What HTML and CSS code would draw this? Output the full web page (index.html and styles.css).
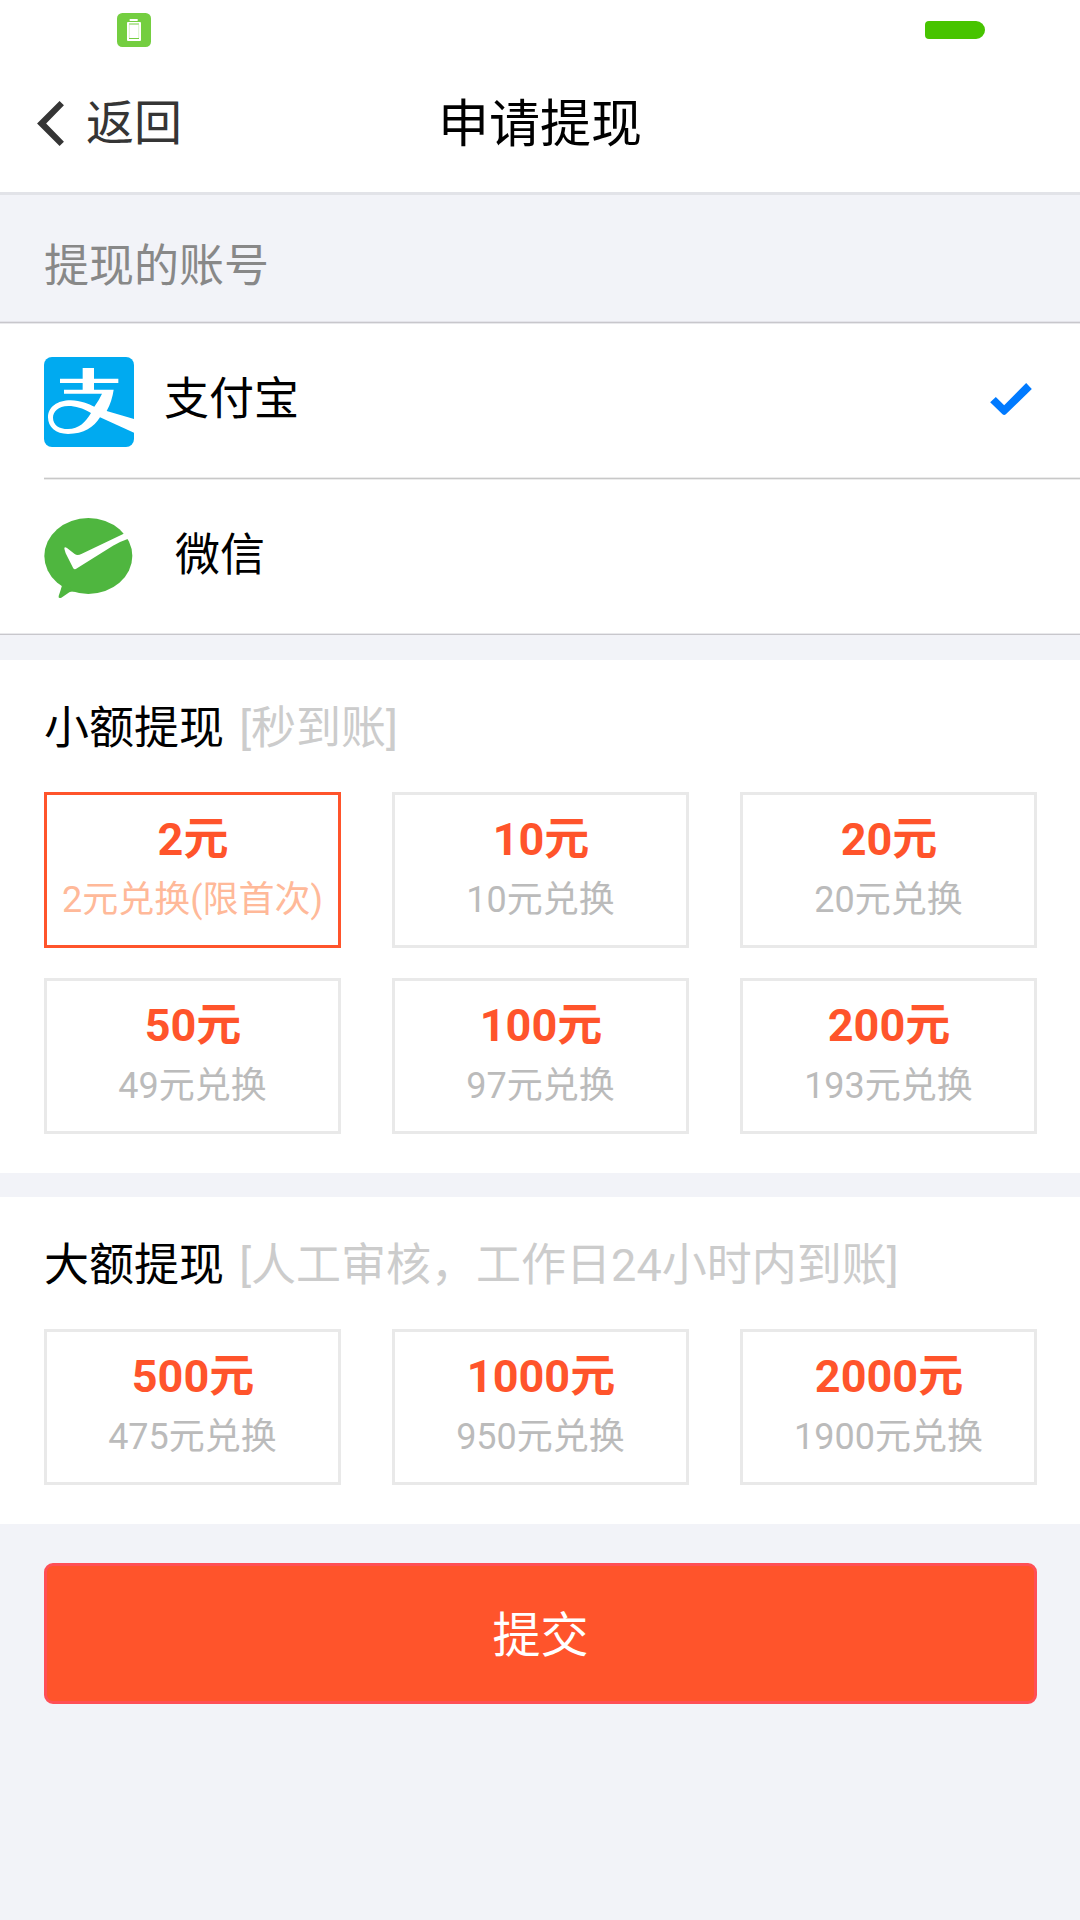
FILE: index.html
```
<!DOCTYPE html>
<html lang="zh-CN">
<head>
    <meta charset="UTF-8">
    <meta name="viewport" content="width=device-width, initial-scale=1.0">
    <title>申请提现</title>
    <link rel="stylesheet" href="styles.css">
</head>
<body>
    <div class="status-bar">
        <svg class="battery-app" viewBox="0 0 102 102">
            <rect width="102" height="102" rx="16" fill="#74ce40"/>
            <rect x="38" y="18" width="24" height="6" fill="#fff"/>
            <rect x="30" y="27" width="42" height="57" rx="3" fill="#fff"/>
            <path d="M36 33h30M36 76.500h30" stroke="#74ce40" stroke-width="3"/>
            <path d="M37 36v39M65 36v39" stroke="#c7ebb3" stroke-width="2"/>
        </svg>
        <div class="battery-level"></div>
    </div>

    <header class="header">
        <a class="back">
            <svg class="back-icon" viewBox="0 0 80 134"><path d="M67 0L80 13L27 67L80 121L67 134L0 67z" fill="#353535"/></svg>
            <span>返回</span>
        </a>
        <h1 class="title">申请提现</h1>
    </header>

    <h2 class="label">提现的账号</h2>
    <div class="accounts">
        <div class="account">
            <svg class="account-icon" viewBox="0 0 270 270">
                <rect width="270" height="270" rx="24" fill="#00aaf0"/>
                <path d="M116 33H150V65H223V78H150V98H209Q204 133 188 162L270 186V227L168 181C150 210 120 231 72 231C35 231 12 210 12 181C12 150 40 130 80 130C110 130 135 142 151 149Q165 130 174 110H60V98H116V78H48V65H116zM141 168C115 153 95 147 73 147C42 147 27 165 27 182C27 204 45 216 72 216C105 216 125 195 141 168z" fill="#fff" fill-rule="evenodd"/>
            </svg>
            <span class="account-name">支付宝</span>
            <svg class="check" viewBox="0 0 125 96"><path d="M0 58L17 42L42 67L108 0L125 18L47 94Q42 98 37 94z" fill="#007aff"/></svg>
        </div>
        <div class="account">
            <svg class="account-icon wechat" viewBox="0 0 270 270">
                <ellipse cx="133" cy="132" rx="132" ry="114" fill="#4fb63f"/>
                <path d="M54 210Q55 222 50 234L44 252Q42 261 52 257L76 241Q82 237 94 239z" fill="#4fb63f"/>
                <path d="M61 110Q61 103 69 108L92 126Q100 132 112 126L236 67L254 54L268 78L251 81Q230 88 207 101L99 169Q91 175 87 167L65 124z" fill="#fff"/>
            </svg>
            <span class="account-name wechat">微信</span>
        </div>
    </div>

    <section class="panel small">
        <h2 class="panel-title">小额提现 <span class="hint">[秒到账]</span></h2>
        <div class="amounts">
            <div class="amount active"><b>2元</b><span>2元兑换(限首次)</span></div>
            <div class="amount"><b>10元</b><span>10元兑换</span></div>
            <div class="amount"><b>20元</b><span>20元兑换</span></div>
            <div class="amount"><b>50元</b><span>49元兑换</span></div>
            <div class="amount"><b>100元</b><span>97元兑换</span></div>
            <div class="amount"><b>200元</b><span>193元兑换</span></div>
        </div>
    </section>

    <section class="panel">
        <h2 class="panel-title">大额提现 <span class="hint">[人工审核，工作日24小时内到账]</span></h2>
        <div class="amounts">
            <div class="amount"><b>500元</b><span>475元兑换</span></div>
            <div class="amount"><b>1000元</b><span>950元兑换</span></div>
            <div class="amount"><b>2000元</b><span>1900元兑换</span></div>
        </div>
    </section>

    <button class="submit">提交</button>
</body>
</html>
```
FILE: styles.css
```
* {
    box-sizing: border-box;
}
body {
    margin: 0;
    min-height: 1920px;
    background-color: #f2f3f8;
    color: #000;
    font-family: Roboto, "Noto Sans CJK SC", sans-serif;
    font-size: 45px;
}
h1, h2 {
    margin: 0;
    font-weight: normal;
}
svg {
    display: block;
}
.status-bar {
    display: flex;
    justify-content: space-between;
    align-items: center;
    height: 60px;
    padding: 0 95px 0 117px;
    background-color: #fff;
}
.battery-app {
    width: 34px;
    height: 34px;
}
.battery-level {
    width: 60px;
    height: 18px;
    border-radius: 4px 9px 9px 4px;
    background-color: #47c400;
}
.header {
    display: grid;
    grid-template-columns: 1fr auto 1fr;
    align-items: center;
    height: 135px;
    padding: 0 37px 4px;
    border-bottom: 3px solid #e2e3e8;
    background-color: #fff;
}
.back {
    display: flex;
    align-items: center;
    gap: 22px;
    color: #353535;
    font-size: 48px;
    line-height: 60px;
}
.back-icon {
    width: 27px;
    height: 45px;
    margin-bottom: 2px;
}
.title {
    padding-top: 1px;
    font-size: 51px;
    line-height: 60px;
}
.label {
    height: 127px;
    padding: 14px 44px 0;
    color: #888;
    font-size: 45px;
    line-height: 116px;
}
.accounts {
    border-top: 1px solid #c8c7cc;
    border-bottom: 1px solid #c8c7cc;
    background-color: #fff;
    box-shadow: 0 -1px #e4e4ea, inset 0 1px #e9e9ec, inset 0 -1px #e9e9ec;
}
.account {
    display: flex;
    align-items: center;
    height: 155px;
    margin-left: 44px;
    padding-right: 48px;
}
.account + .account {
    height: 156px;
    border-top: 1px solid #c8c8c8;
    box-shadow: 0 -1px #ececec, inset 0 1px #ececec;
}
.account-icon {
    width: 90px;
    height: 90px;
    margin-top: 2px;
}
.account-icon.wechat {
    margin-top: 0;
}
.account-name {
    flex: 1;
    margin-left: 30px;
    padding-bottom: 2px;
    line-height: 60px;
}
.account-name.wechat {
    margin-left: 41px;
}
.check {
    width: 42px;
    height: 32px;
    margin-bottom: 4px;
}
.panel {
    padding: 41px 43px 39px 44px;
    background-color: #fff;
}
.panel.small {
    margin: 25px 0 24px;
}
.panel-title {
    margin-bottom: 35px;
    font-size: 45px;
    line-height: 56px;
}
.hint {
    margin-left: 4px;
    color: #ccc;
}
.amounts {
    display: grid;
    grid-template-columns: repeat(3, 1fr);
    gap: 30px 51px;
}
.amount {
    display: flex;
    flex-direction: column;
    align-items: center;
    height: 156px;
    padding-top: 15px;
    border: 3px solid #e9e9e9;
    color: #bbb;
    font-size: 36px;
    line-height: 60px;
    white-space: nowrap;
}
.amount b {
    padding-left: 1px;
    color: #ff542b;
    font-size: 45px;
}
.amount.active {
    border-color: #ff542b;
    color: #ffb999;
}
.submit {
    display: block;
    width: 993px;
    height: 141px;
    margin: 39px 0 0 44px;
    padding: 0 0 6px;
    border: 3px solid #ff4f55;
    border-radius: 9px;
    background-color: #ff542b;
    color: #fff;
    font-family: inherit;
    font-size: 48px;
}
```
